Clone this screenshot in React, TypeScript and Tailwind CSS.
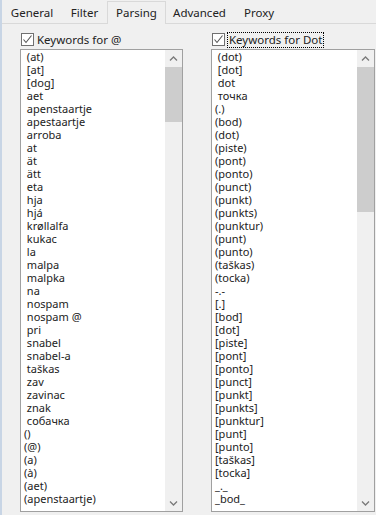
import React from "react";

const leftItems = [
  " (at)", " [at]", " [dog]", " aet", " apenstaartje", " apestaartje", " arroba", " at", " ät", " ätt",
  " eta", " hja", " hjá", " krøllalfa", " kukac", " la", " malpa", " malpka", " na", " nospam",
  " nospam @", " pri", " snabel", " snabel-a", " taškas", " zav", " zavinac", " znak", " собачка",
  "()", "(@)", "(a)", "(à)", "(aet)", "(apenstaartje)",
];

const rightItems = [
  " (dot)", " [dot]", " dot", " точка", "(.)", "(bod)", "(dot)", "(piste)", "(pont)", "(ponto)",
  "(punct)", "(punkt)", "(punkts)", "(punktur)", "(punt)", "(punto)", "(taškas)", "(tocka)", "-.-",
  "[.]", "[bod]", "[dot]", "[piste]", "[pont]", "[ponto]", "[punct]", "[punkt]", "[punkts]",
  "[punktur]", "[punt]", "[punto]", "[taškas]", "[tocka]", "_._", "_bod_",
];

function Chevron({ down }: { down?: boolean }) {
  return (
    <svg width="9" height="6" viewBox="0 0 9 6">
      <path
        d={down ? "M1 1.5 L4.5 5 L8 1.5" : "M1 4.5 L4.5 1 L8 4.5"}
        fill="none"
        stroke="#7a7a7a"
        strokeWidth="1.3"
      />
    </svg>
  );
}

function CheckBox() {
  return (
    <div className="w-[13px] h-[13px] border border-[#707070] bg-white flex items-center justify-center">
      <svg width="11" height="11" viewBox="0 0 11 11">
        <path d="M1.5 5.5 L4 8.5 L9.5 1.5" fill="none" stroke="#555" strokeWidth="1.1" />
      </svg>
    </div>
  );
}

function ListBox({ items, thumbH, width }: { items: string[]; thumbH: number; width: string }) {
  return (
    <div className={`${width} h-[463px] border border-[#a0a0a0] bg-white flex overflow-hidden`}>
      <div className="flex-1 flex flex-col pl-[3px] overflow-hidden">
        {items.map((t, i) => (
          <div key={i} className="h-[13px] leading-[13px] whitespace-pre text-[11px] text-[#222]">
            {t}
          </div>
        ))}
      </div>
      <div className="w-[17px] flex flex-col bg-[#f0f0f0]">
        <div className="h-[17px] flex items-center justify-center">
          <Chevron />
        </div>
        <div className="flex-1 flex flex-col">
          <div className="bg-[#cdcdcd] w-[17px]" style={{ height: thumbH }} />
        </div>
        <div className="h-[17px] flex items-center justify-center">
          <Chevron down />
        </div>
      </div>
    </div>
  );
}

export default function App() {
  const tabs = [
    { label: "General", w: "w-[60px]" },
    { label: "Filter", w: "w-[45px]" },
    { label: "Parsing", w: "w-[59px]", active: true },
    { label: "Advanced", w: "w-[67px]" },
    { label: "Proxy", w: "w-[52px]" },
  ];
  return (
    <div
      className="w-[376px] h-[515px] bg-[#f0f0f0] flex overflow-hidden"
      style={{ fontFamily: '"Noto Sans", "Open Sans", sans-serif' }}
    >
      <div className="w-[2px] bg-[#c8d5e5]" />
      <div className="flex-1 flex flex-col">
        <div className="h-[24px] flex items-end border-b border-[#d9d9d9] relative">
          {tabs.map((t) =>
            t.active ? (
              <div
                key={t.label}
                className={`${t.w} h-[23px] -mb-px bg-[#f0f0f0] border border-b-0 border-[#d9d9d9] flex items-center justify-center text-[11.5px] text-[#222] relative z-10`}
              >
                {t.label}
              </div>
            ) : (
              <div
                key={t.label}
                className={`${t.w} h-[21px] flex items-center justify-center text-[11.5px] text-[#222]`}
              >
                {t.label}
              </div>
            )
          )}
        </div>
        <div className="flex gap-[28px] pl-[18px] pt-[6px]">
          <div className="flex flex-col">
            <div className="h-[19px] flex items-center gap-[3px] pl-px">
              <CheckBox />
              <span className="text-[11.5px] text-[#222]">Keywords for @</span>
            </div>
            <ListBox items={leftItems} thumbH={55} width="w-[163px]" />
          </div>
          <div className="flex flex-col">
            <div className="h-[19px] flex items-center gap-[2px] pl-px">
              <CheckBox />
              <span className="text-[11.5px] leading-[14px] text-[#222] border border-dotted border-black px-px">
                Keywords for Dot
              </span>
            </div>
            <ListBox items={rightItems} thumbH={145} width="w-[164px]" />
          </div>
        </div>
      </div>
    </div>
  );
}
